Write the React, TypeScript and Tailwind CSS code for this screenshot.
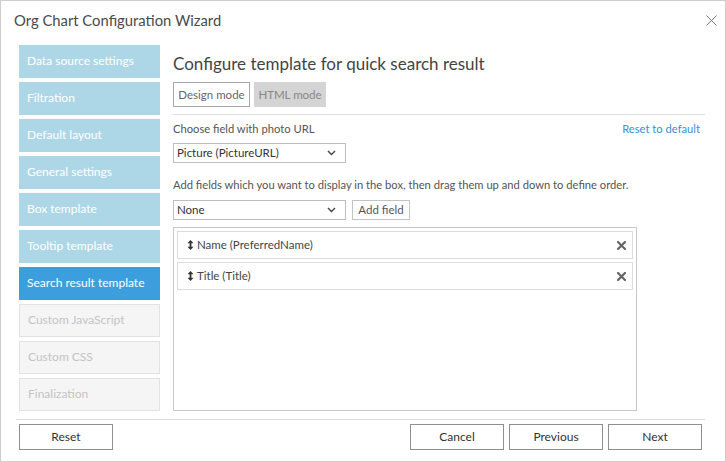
import React from "react";

const navItems: { label: string; state: "done" | "active" | "disabled" }[] = [
  { label: "Data source settings", state: "done" },
  { label: "Filtration", state: "done" },
  { label: "Default layout", state: "done" },
  { label: "General settings", state: "done" },
  { label: "Box template", state: "done" },
  { label: "Tooltip template", state: "done" },
  { label: "Search result template", state: "active" },
  { label: "Custom JavaScript", state: "disabled" },
  { label: "Custom CSS", state: "disabled" },
  { label: "Finalization", state: "disabled" },
];

function Chevron() {
  return (
    <svg width="9" height="6" viewBox="0 0 9 6" className="shrink-0">
      <path d="M1 1 L4.5 4.5 L8 1" fill="none" stroke="#444" strokeWidth="1.4" />
    </svg>
  );
}

function Select({ value }: { value: string }) {
  return (
    <div className="w-[173px] h-[20px] border border-[#bdbdbd] flex items-center justify-between pl-[3px] pr-[9px] text-[11.5px] text-[#333] leading-none">
      <span>{value}</span>
      <Chevron />
    </div>
  );
}

function DragIcon() {
  return (
    <svg width="7" height="10" viewBox="0 0 7 10" className="shrink-0">
      <path d="M3.5 0 L6.5 3.2 L0.5 3.2 Z" fill="#333" />
      <path d="M3.5 10 L6.5 6.8 L0.5 6.8 Z" fill="#333" />
      <rect x="2.6" y="2.5" width="1.8" height="5" fill="#333" />
    </svg>
  );
}

function DeleteIcon() {
  return (
    <svg width="9" height="9" viewBox="0 0 9 9" className="shrink-0">
      <path d="M1 1 L8 8 M8 1 L1 8" stroke="#666" strokeWidth="2.2" strokeLinecap="square" />
    </svg>
  );
}

function FieldItem({ label }: { label: string }) {
  return (
    <div className="h-[28px] border border-[#dcdcdc] flex items-center justify-between pl-[9px] pr-[6px]">
      <div className="flex items-center gap-[3px] text-[11.5px] text-[#444]">
        <DragIcon />
        <span>{label}</span>
      </div>
      <DeleteIcon />
    </div>
  );
}

function FooterButton({ label }: { label: string }) {
  return (
    <div className="w-[94px] h-[26px] border border-[#8f8f8f] flex items-center justify-center pb-[1px] text-[12px] text-[#333]">
      {label}
    </div>
  );
}

export default function App() {
  return (
    <div className="w-[726px] h-[462px] bg-white border border-[#cdcdcd] flex flex-col font-['Lato',sans-serif] overflow-hidden">
      <div className="h-[44px] flex items-start justify-between pl-[13px] pr-[8px] shrink-0">
        <div className="mt-[7px] text-[14.8px] leading-[24px] text-[#4a4a4a]">Org Chart Configuration Wizard</div>
        <svg width="11" height="11" viewBox="0 0 11 11" className="mt-[14px]">
          <path d="M0.5 0.5 L10.5 10.5 M10.5 0.5 L0.5 10.5" stroke="#777" strokeWidth="1" />
        </svg>
      </div>
      <div className="h-[366px] flex pl-[18px] gap-[13px] shrink-0">
        <div className="w-[141px] flex flex-col gap-[4px]">
          {navItems.map((it) => (
            <div
              key={it.label}
              className={
                "h-[33px] flex items-center pl-[8px] pb-[2px] text-[12px] " +
                (it.state === "done"
                  ? "bg-[#add7e6] text-white"
                  : it.state === "active"
                  ? "bg-[#3d9edd] text-white"
                  : "bg-[#f5f5f5] border border-[#e2e2e2] text-[#c4c4c4]")
              }
            >
              {it.label}
            </div>
          ))}
        </div>
        <div className="w-[532px] flex flex-col">
          <div className="h-[37px] flex items-center text-[17px] text-[#444]">Configure template for quick search result</div>
          <div className="flex gap-[4px] h-[25px]">
            <div className="w-[77px] border border-[#a8a8a8] flex items-center justify-center text-[11.5px] text-[#666]">Design mode</div>
            <div className="w-[72px] bg-[#d4d4d4] flex items-center justify-center text-[11.5px] text-[#888]">HTML mode</div>
          </div>
          <div className="mt-[7px] border-t border-[#e0e0e0]" />
          <div className="h-[28px] flex items-center justify-between pr-[5px] text-[11.2px]">
            <span className="text-[#555]">Choose field with photo URL</span>
            <span className="text-[#3b8ed6]">Reset to default</span>
          </div>
          <Select value="Picture (PictureURL)" />
          <div className="mt-[11px] h-[22px] flex items-center text-[11.2px] text-[#555]">
            Add fields which you want to display in the box, then drag them up and down to define order.
          </div>
          <div className="mt-[4px] flex gap-[6px]">
            <Select value="None" />
            <div className="w-[58px] h-[20px] border border-[#c4c4c4] flex items-center justify-center text-[11.5px] text-[#555]">Add field</div>
          </div>
          <div className="mt-[7px] flex-1 w-[464px] border border-[#c8c8c8] p-[3px] flex flex-col gap-[3px]">
            <FieldItem label="Name (PreferredName)" />
            <FieldItem label="Title (Title)" />
          </div>
        </div>
      </div>
      <div className="mt-[8px] ml-[15px] w-[689px] border-t border-[#dedede] pt-[4px] px-[3px] flex justify-between">
        <FooterButton label="Reset" />
        <div className="flex gap-[5px]">
          <FooterButton label="Cancel" />
          <FooterButton label="Previous" />
          <FooterButton label="Next" />
        </div>
      </div>
    </div>
  );
}
